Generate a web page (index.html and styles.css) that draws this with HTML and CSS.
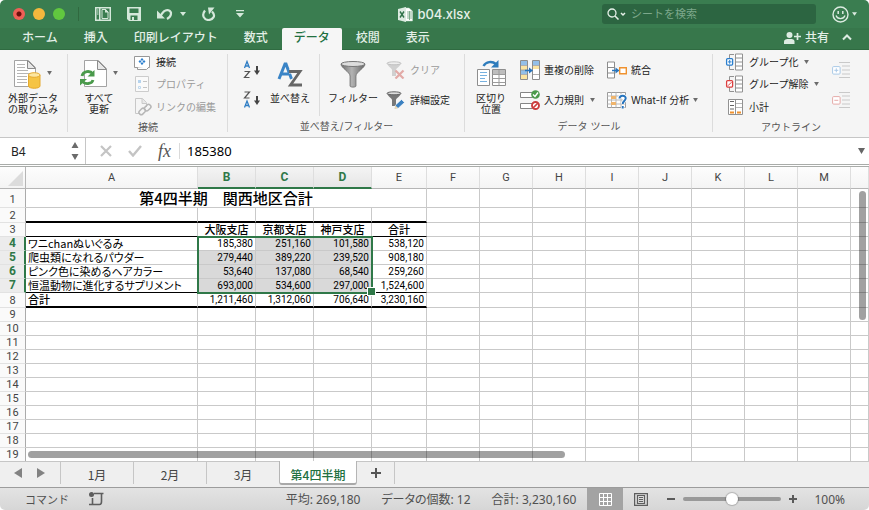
FILE: index.html
```
<!DOCTYPE html>
<html lang="ja">
  <head>
    <meta charset="UTF-8">
    <meta name="viewport" content="width=device-width, initial-scale=1.0">
    <title>b04.xlsx</title>
    <link rel="stylesheet" href="styles.css">
  </head>
  <body>
    <div class="window">

      <!-- Title bar -->
      <header class="titlebar">
        <div class="quick">
          <button class="light red" aria-label="閉じる"></button>
          <button class="light yellow" aria-label="しまう"></button>
          <button class="light green" aria-label="拡大"></button>
          <span class="quick-sep"></span>
          <button class="quick-btn" aria-label="テンプレート"><svg width="16" height="14" viewBox="0 0 16 14"><path d="M0 0h16v14H0zM1.500 1.500v11h2.500v-11zM5.500 1.500v11h9v-11z" fill="#d5e8db" fill-rule="evenodd"/><path d="M2 3h1.500M2 5h1.500M2 7h1.500" stroke="#d5e8db"/><path d="M7 2.500h3.500L13 5v6.500H7z" fill="none" stroke="#d5e8db" stroke-width="1"/><path d="M10 2v3.500h3.500V5L10.500 2z" fill="#d5e8db"/></svg></button>
          <button class="quick-btn" aria-label="保存"><svg width="14" height="14" viewBox="0 0 14 14"><path d="M0 0h14v14H2l-2-2zM2.500 1.500V6h9V1.500zM3.500 8.500V13H5v-3h2v3h3.500V8.500z" fill="#d5e8db" fill-rule="evenodd"/></svg></button>
          <button class="quick-btn undo" aria-label="元に戻す"><svg width="16" height="14" viewBox="0 0 16 14"><path d="M3.500 9C6 4.500 9 2.500 11.500 3.300c3.800 1.300 3.300 6-1.500 8.700" fill="none" stroke="#d5e8db" stroke-width="2.200"/><path d="M0 3.500v8h8z" fill="#d5e8db"/></svg><svg class="caret" width="6" height="4" viewBox="0 0 6 4"><path d="M0 0h6L3 4z" fill="#d5e8db"/></svg></button>
          <button class="quick-btn redo" aria-label="やり直し"><svg width="14" height="14" viewBox="0 0 14 14"><path d="M3 3.500C-1 8.500 2.500 13 6.500 13s8-4 3.500-8.500" fill="none" stroke="#d5e8db" stroke-width="2.200"/><path d="M6 .5h6.500L7 7.500z" fill="#d5e8db"/></svg></button>
          <button class="quick-btn" aria-label="カスタマイズ"><svg width="8" height="8" viewBox="0 0 8 8"><path d="M0 0h8v1.300H0zM0 3h8L4 7.500z" fill="#d5e8db"/></svg></button>
        </div>
        <h1 class="doc-title">
          <svg width="15" height="15" viewBox="0 0 15 15"><path d="M6 1h5l3.500 3v10H6z" fill="#fff" stroke="#c2d8ca" stroke-width=".5"/><path d="M9 5h5M9 7h5M9 9h5M9 11h5M11.500 4v9" stroke="#6aa17b" stroke-width=".8"/><path d="M0 2l8-2v15l-8-2z" fill="#dcebe1"/><path d="M2 4.500l4 6M6 4.500l-4 6" stroke="#30734a" stroke-width="1.400"/></svg>
          b04.xlsx
        </h1>
        <div class="title-right">
          <label class="search">
            <svg width="20" height="12" viewBox="0 0 20 12"><circle cx="5" cy="5" r="4" fill="none" stroke="#e5f0e8" stroke-width="1.300"/><path d="M8 8l3.500 3.500M14 5l2 2 2-2" fill="none" stroke="#e5f0e8" stroke-width="1.500"/></svg>
            <input type="text" placeholder="シートを検索" aria-label="シートを検索">
          </label>
          <button class="smile" aria-label="フィードバック"><svg width="17" height="17" viewBox="0 0 17 17"><circle cx="8.500" cy="8.500" r="7.500" fill="none" stroke="#dcebe1" stroke-width="1.400"/><path d="M6.200 5v3M10.800 5v3" stroke="#dcebe1" stroke-width="1.500"/><path d="M4 9.500c1.500 4.200 7.500 4.200 9 0" fill="none" stroke="#dcebe1" stroke-width="1.300"/></svg><svg width="5" height="4" viewBox="0 0 6 4"><path d="M0 0h6L3 4z" fill="#dcebe1"/></svg></button>
        </div>
      </header>

      <!-- Ribbon tabs -->
      <nav class="tabs">
        <a href="#">ホーム</a>
        <a href="#">挿入</a>
        <a href="#">印刷レイアウト</a>
        <a href="#">数式</a>
        <a href="#" class="active">データ</a>
        <a href="#">校閲</a>
        <a href="#">表示</a>
        <button class="share"><svg width="17" height="12" viewBox="0 0 17 12"><circle cx="5.500" cy="3" r="3" fill="#dcebe1"/><path d="M0 12V9.500C0 7.500 2 7 5.500 7s5 .5 5 2.500V12z" fill="#dcebe1"/><path d="M10 4.500h7M13.500 1v7" stroke="#dcebe1" stroke-width="1.700"/></svg>共有</button>
        <button class="fold" aria-label="リボンを折りたたむ"><svg width="10" height="7" viewBox="0 0 10 7"><path d="M1 5.500l4-4 4 4" fill="none" stroke="#dcebe1" stroke-width="2"/></svg></button>
      </nav>

      <!-- Ribbon -->
      <div class="ribbon">
        <section class="group g-import">
          <div class="tools">
            <button class="big">
              <span class="big-icon"><svg width="27" height="30" viewBox="0 0 27 30"><path d="M.5 1.500h14l7 7v19H.5z" fill="#fff" stroke="#a3a3a3"/><path d="M13.500 1.500l8 8h-8z" fill="#e8e8e8" stroke="#8c8c8c"/><path d="M3 5.500h8M3 8.500h8M3 11.500h11M3 14.500h14M3 17.500h10M3 20.500h10M3 23.500h10" stroke="#b5b5b5"/><path d="M14.500 16v11c0 3 11.500 3 11.500 0V16z" fill="#f5c445" stroke="#e5a92e"/><ellipse cx="20.200" cy="16" rx="5.800" ry="2.300" fill="#fce6a1" stroke="#e5a92e"/></svg><svg class="caret" width="5" height="4" viewBox="0 0 6 5"><path d="M0 0h6L3 5z" fill="#6b6b6b"/></svg></span>
              <span>外部データ<br>の取り込み</span>
            </button>
          </div>
        </section>

        <section class="group g-connect">
          <div class="tools">
            <button class="big">
              <span class="big-icon"><svg width="27" height="30" viewBox="0 0 27 30"><path d="M4.500 1.500h14l8 8v18h-22z" fill="#fff" stroke="#a3a3a3"/><path d="M17.500 1.500l9 9h-9z" fill="#e8e8e8" stroke="#8c8c8c"/><path d="M2 17c1-5 8-6 11-2M13 21c-1 4-8 5-11 1" fill="none" stroke="#4a9a4b" stroke-width="2.800"/><path d="M14.500 11v6.500h-7zM0 26.500V20h7z" fill="#4a9a4b"/></svg><svg class="caret" width="5" height="4" viewBox="0 0 6 5"><path d="M0 0h6L3 5z" fill="#6b6b6b"/></svg></span>
              <span>すべて<br>更新</span>
            </button>
            <div class="list three">
              <button class="small"><svg width="20" height="18" viewBox="0 0 20 18"><path d="M2.500 3.500h15v11h-15z" fill="#fff" stroke="#979797"/><path d="M5.500 14.500v2h9l3-3" fill="#fff" stroke="#979797"/><path d="M10 5l1.500 1.500L10 8 8.500 6.500zM10 9l1.500 1.500L10 12l-1.500-1.500zM8 7l1.500 1.500L8 10 6.500 8.500zM12 7l1.500 1.500L12 10l-1.500-1.500z" fill="#2b7fce"/></svg>接続</button>
              <button class="small" disabled><svg width="20" height="18" viewBox="0 0 20 18"><path d="M3.500 1.500h13v15h-13z" fill="#fafafa" stroke="#ccc"/><path d="M6 5h3v3H6z" fill="#b5d3ee"/><path d="M6.500 11.500h2v2h-2z" fill="none" stroke="#bed8ef"/><path d="M11 6.500h4M11 12.500h4" stroke="#c4c4c4"/></svg>プロパティ</button>
              <button class="small" disabled><svg width="20" height="18" viewBox="0 0 20 18"><path d="M3.500.5h7l4 4V9M3.500.5v15h4" fill="none" stroke="#c8c8c8"/><path d="M10 .5v5h5" fill="#e8e8e8" stroke="#c8c8c8"/><rect x="7" y="11.500" width="7" height="4.500" rx="2" transform="rotate(-45 10 14)" fill="none" stroke="#b6b6b6" stroke-width="1.500"/><rect x="12" y="7.500" width="7" height="4.500" rx="2" transform="rotate(-45 15.500 9.500)" fill="none" stroke="#b6b6b6" stroke-width="1.500"/></svg>リンクの編集</button>
            </div>
          </div>
          <h2>接続</h2>
        </section>

        <section class="group g-sort">
          <div class="tools">
            <div class="list two az">
              <button class="small" aria-label="昇順"><svg width="20" height="20" viewBox="0 0 20 20"><path d="M2.500 8L5 1.500 7.500 8M3.500 6h3" fill="none" stroke="#2f7dc4" stroke-width="1.300"/><path d="M2.500 11.500h5l-5 6h5" fill="none" stroke="#555" stroke-width="1.200"/><path d="M15 6v6" stroke="#444" stroke-width="2"/><path d="M12 10.500h6L15 15z" fill="#444"/></svg></button>
              <button class="small" aria-label="降順"><svg width="20" height="20" viewBox="0 0 20 20"><path d="M2.500 2h5l-5 6h5" fill="none" stroke="#555" stroke-width="1.200"/><path d="M2.500 17.500L5 11l2.500 6.500M3.500 15.500h3" fill="none" stroke="#2f7dc4" stroke-width="1.300"/><path d="M15 6v6" stroke="#444" stroke-width="2"/><path d="M12 10.500h6L15 15z" fill="#444"/></svg></button>
            </div>
            <button class="big sort">
              <span class="big-icon"><svg width="26" height="28" viewBox="0 0 26 28"><path d="M2 19L8 4h1l5.500 15M4 14h8" fill="none" stroke="#3a84c6" stroke-width="3"/><path d="M12 11.500h11L13.500 25H25" fill="none" stroke="#f5f5f5" stroke-width="4"/><path d="M12 11.500h11L13.500 25H25" fill="none" stroke="#666" stroke-width="2.800"/></svg></span>
              <span>並べ替え</span>
            </button>
            <span class="inner-sep"></span>
            <button class="big filter">
              <span class="big-icon"><svg width="26" height="28" viewBox="0 0 26 28"><defs><linearGradient id="metal"><stop offset="0" stop-color="#6e6e6e"/><stop offset=".45" stop-color="#b3b3b3"/><stop offset="1" stop-color="#666"/></linearGradient></defs><path d="M1 4c0 4 9 8 9 12v10c0 1.500 6 1.500 6 0V16c0-4 9-8 9-12z" fill="url(#metal)" stroke="#666" stroke-width=".7"/><ellipse cx="13" cy="4" rx="12" ry="2.500" fill="#ddd" stroke="#777"/></svg></span>
              <span>フィルター</span>
            </button>
            <div class="list two">
              <button class="small" disabled><svg width="20" height="18" viewBox="0 0 20 18"><path d="M1 2c0 3 5 5 5 7v6h4V9c0-2 5-4 5-7z" fill="#d0d0d0"/><ellipse cx="8" cy="2.300" rx="7" ry="1.500" fill="#eee" stroke="#c2c2c2"/><path d="M9.500 9.500l8 8M17.500 9.500l-8 8" stroke="#e2aaa7" stroke-width="2.200"/></svg>クリア</button>
              <button class="small"><svg width="20" height="18" viewBox="0 0 20 18"><path d="M1 2c0 3 5 5 5 7v6h4V9c0-2 5-4 5-7z" fill="#777"/><ellipse cx="8" cy="2.300" rx="7" ry="1.500" fill="#ddd" stroke="#666"/><path d="M8.500 18l1-4 6-5.500 3 3-6 5.500z" fill="#3b80c0" stroke="#fff" stroke-width=".6"/><path d="M8.500 18l1-3.500 2.500 2.500z" fill="#f0d9b0"/></svg>詳細設定</button>
            </div>
          </div>
          <h2>並べ替え/フィルター</h2>
        </section>

        <section class="group g-data">
          <div class="tools">
            <button class="big split">
              <span class="big-icon"><svg width="29" height="28" viewBox="0 0 29 28"><path d="M6.500 6C9 1.500 15 .8 19 4" fill="none" stroke="#2e7cbc" stroke-width="2.400"/><path d="M21.500 0v7.500H14z" fill="#2e7cbc"/><path d="M.5 9.500h12v16H.5zM15.500 9.500h13v16h-13z" fill="#fff" stroke="#8e8e8e"/><path d="M3 12.500h7M3 15.500h7M3 18.500h5M3 21.500h7" stroke="#77b1df"/><path d="M16 10h12v4H16z" fill="#bebebe"/><path d="M15.500 14.500h13M15.500 18.500h13M15.500 22.500h13M22 10v15" stroke="#9c9c9c"/></svg></span>
              <span>区切り<br>位置</span>
            </button>
            <div class="list two first">
              <button class="small"><svg width="20" height="20" viewBox="0 0 20 20"><path d="M.5.5h7v19h-7zM12.500.5h7v19h-7z" fill="#fff" stroke="#8d8d8d"/><path d="M1 1h6v4H1zM1 10h6v4H1zM13 1h6v4h-6z" fill="#93bfe8"/><path d="M1 6h6v4H1zM1 15h6v4H1zM13 6h6v3h-6z" fill="#fbe4a1"/><path d="M1 5.500h6M1 10h6M1 14.500h6M13 5.500h6M13 14.500h6" stroke="#8d8d8d" stroke-width=".7"/><path d="M5 10.500h5" stroke="#2774bd" stroke-width="1.500"/><path d="M9 7.500l4 3-4 3z" fill="#2774bd"/></svg>重複の削除</button>
              <button class="small"><svg width="20" height="20" viewBox="0 0 20 20"><path d="M.5 2.500h12v5H.5zM.5 13.500h12v5H.5z" fill="#fff" stroke="#858585"/><circle cx="15.500" cy="4.500" r="4.300" fill="#4c9a4c"/><path d="M13 4.500l2 2 3-4" fill="none" stroke="#fff" stroke-width="1.400"/><circle cx="15.500" cy="15.500" r="3.500" fill="#fff" stroke="#cc3f3f" stroke-width="1.900"/><path d="M13 18l5-5" stroke="#cc3f3f" stroke-width="1.700"/></svg>入力規則<svg class="caret" width="5" height="4" viewBox="0 0 6 5"><path d="M0 0h6L3 5z" fill="#6b6b6b"/></svg></button>
            </div>
            <div class="list two">
              <button class="small"><svg width="20" height="18" viewBox="0 0 20 18"><path d="M.5 1h7v16h-7zM.5 6.500h7M.5 12h7" fill="#fff" stroke="#8d8d8d"/><path d="M5 9.500h4" stroke="#2774bd" stroke-width="1.500"/><path d="M8.500 6.500l4 3-4 3z" fill="#2774bd"/><path d="M12.700 6.700h6.600v6h-6.600z" fill="#fff" stroke="#f0922f" stroke-width="1.400"/></svg>統合</button>
              <button class="small"><svg width="20" height="18" viewBox="0 0 20 18"><path d="M.5 1.500h18v15H.5z" fill="#fff" stroke="#9b9b9b"/><path d="M.5 5h18M.5 9h18M.5 13h18M4.500 1.500v15M9 1.500v15M14 1.500v15" stroke="#b8b8b8"/><path d="M4 5h5v3H4zM4 11h5v3H4z" fill="#efb56e"/><path d="M12.500 7.500c.3-4 6.500-3.500 6.200 0-.3 2.500-3 2.500-3 5.500M15.700 15v2.500" fill="none" stroke="#fff" stroke-width="3.500"/><path d="M12.500 7.500c.3-4 6.500-3.500 6.200 0-.3 2.500-3 2.500-3 5.500M15.700 15v2.500" fill="none" stroke="#2774bd" stroke-width="2"/></svg>What-If 分析<svg class="caret near" width="5" height="4" viewBox="0 0 6 5"><path d="M0 0h6L3 5z" fill="#6b6b6b"/></svg></button>
            </div>
          </div>
          <h2>データ ツール</h2>
        </section>

        <section class="group g-outline">
          <div class="tools">
            <div class="list three">
              <button class="small"><svg width="20" height="18" viewBox="0 0 20 18"><path d="M10.500 1h7v16h-7zM10.500 5h7M10.500 9h7M10.500 13h7" fill="#fff" stroke="#929292"/><path d="M9 1.500H4.500v15H9" fill="none" stroke="#929292"/><rect x="1.600" y="5.600" width="6" height="6.500" rx="1" fill="#fff" stroke="#2b7fce" stroke-width="1.300"/><path d="M3 8.900h3.500M4.700 7v3.700" stroke="#2b7fce"/></svg>グループ化<svg class="caret" width="5" height="4" viewBox="0 0 6 5"><path d="M0 0h6L3 5z" fill="#6b6b6b"/></svg></button>
              <button class="small"><svg width="20" height="18" viewBox="0 0 20 18"><path d="M10.500 1h7v16h-7zM10.500 5h7M10.500 9h7M10.500 13h7" fill="#fff" stroke="#929292"/><path d="M9 1.500H4.500v15H9" fill="none" stroke="#929292"/><rect x="1.600" y="5.600" width="6" height="6.500" rx="1" fill="#fff" stroke="#dc4040" stroke-width="1.300"/><path d="M3 10.700l3.500-3.500" stroke="#dc4040"/></svg>グループ解除<svg class="caret" width="5" height="4" viewBox="0 0 6 5"><path d="M0 0h6L3 5z" fill="#6b6b6b"/></svg></button>
              <button class="small"><svg width="20" height="18" viewBox="0 0 20 18"><path d="M3.500 1.500h14v15h-14zM10.500 1.500v15" fill="#fff" stroke="#929292"/><path d="M5 3.500h4M5 7.500h4M5 11h4" stroke="#666"/><path d="M11 5.500h6M11 9.500h6" stroke="#b8b8b8"/><path d="M5 14.500h4M12 14.500h4" stroke="#f0922f" stroke-width="2"/></svg>小計</button>
            </div>
            <div class="list two detail">
              <button class="small" disabled aria-label="詳細データの表示"><svg width="18" height="16" viewBox="0 0 18 16"><path d="M7 .5h11M10 4h8M10 8h8M10 12h8M7 15.500h11" stroke="#c9c9c9"/><rect x=".6" y="4.600" width="7.500" height="7.500" rx="1" fill="#fff" stroke="#a9c9e6"/><path d="M2.300 8.300h4M4.300 6.300v4" stroke="#a9c9e6"/></svg></button>
              <button class="small" disabled aria-label="詳細を表示しない"><svg width="18" height="16" viewBox="0 0 18 16"><path d="M7 .5h11M10 4h8M10 8h8M10 12h8M7 15.500h11" stroke="#c9c9c9"/><rect x=".6" y="4.600" width="7.500" height="7.500" rx="1" fill="#fff" stroke="#e5aaa8"/><path d="M2.300 8.300h4" stroke="#e5aaa8"/></svg></button>
            </div>
          </div>
          <h2>アウトライン</h2>
        </section>
      </div>

      <!-- Formula bar -->
      <div class="formula">
        <input class="name-box" type="text" value="B4" aria-label="名前ボックス">
        <button class="stepper" aria-label="名前を選択"><svg width="8" height="18" viewBox="0 0 8 18"><path d="M.5 6h7L4 0zM.5 12h7L4 18z" fill="#6b6b6b"/></svg></button>
        <div class="formula-btns">
          <button aria-label="キャンセル"><svg width="12" height="12" viewBox="0 0 12 12"><path d="M1 1l10 10M11 1L1 11" stroke="#c4c4c4" stroke-width="2.200"/></svg></button>
          <button aria-label="入力"><svg width="14" height="12" viewBox="0 0 14 12"><path d="M1 6l4 4.500L13 1" fill="none" stroke="#c4c4c4" stroke-width="2.400"/></svg></button>
          <button class="fx">fx</button>
        </div>
        <input class="value" type="text" value="185380" aria-label="数式バー">
        <button class="expand" aria-label="数式バーを展開"><svg width="7" height="6" viewBox="0 0 7 6"><path d="M0 0h7L3.500 6z" fill="#666"/></svg></button>
      </div>

      <!-- Worksheet -->
      <main class="sheet">
        <table class="grid" id="grid">
          <colgroup>
            <col class="c-num"><col class="c-a"><col class="c-b"><col class="c-b"><col class="c-b"><col class="c-e">
            <col class="c-f"><col class="c-f"><col class="c-f"><col class="c-f"><col class="c-f"><col class="c-f"><col class="c-f"><col class="c-f"><col>
          </colgroup>
          <thead>
            <tr>
              <th class="corner"><svg width="15" height="15" viewBox="0 0 15 15"><path d="M15 0v15H0z" fill="#dcdcdc"/></svg></th>
              <th>A</th><th class="on">B</th><th class="on">C</th><th class="on">D</th><th>E</th><th>F</th><th>G</th><th>H</th><th>I</th><th>J</th><th>K</th><th>L</th><th>M</th><th></th>
            </tr>
          </thead>
          <tbody>
            <tr class="r-title"><th>1</th><td colspan="5">第4四半期　関西地区合計</td></tr>
            <tr class="thick"><th>2</th><td class="k"></td><td class="k"></td><td class="k"></td><td class="k"></td><td class="k"></td></tr>
            <tr class="r-head"><th>3</th><td class="k"></td><td class="k">大阪支店</td><td class="k">京都支店</td><td class="k">神戸支店</td><td class="k">合計</td></tr>
            <tr class="on"><th>4</th><td>ワニchanぬいぐるみ</td><td class="num active">185,380<span class="selection"></span></td><td class="num sel">251,160</td><td class="num sel">101,580</td><td class="num">538,120</td></tr>
            <tr class="on"><th>5</th><td>爬虫類になれるパウダー</td><td class="num sel">279,440</td><td class="num sel">389,220</td><td class="num sel">239,520</td><td class="num">908,180</td></tr>
            <tr class="on"><th>6</th><td>ピンク色に染めるヘアカラー</td><td class="num sel">53,640</td><td class="num sel">137,080</td><td class="num sel">68,540</td><td class="num">259,260</td></tr>
            <tr class="on"><th>7</th><td class="k">恒温動物に進化するサプリメント</td><td class="num sel k">693,000</td><td class="num sel k">534,600</td><td class="num sel k">297,000</td><td class="num k">1,524,600</td></tr>
            <tr class="thick"><th>8</th><td class="k total">合計</td><td class="num k">1,211,460</td><td class="num k">1,312,060</td><td class="num k">706,640</td><td class="num k">3,230,160</td></tr>
          </tbody>
        </table>
        <div class="scroll-v"></div>
        <div class="scroll-h"></div>
      </main>

      <!-- Sheet tabs -->
      <nav class="sheets">
        <div class="sheet-nav">
          <button aria-label="前のシート"><svg width="8" height="10" viewBox="0 0 8 10"><path d="M8 0v10L0 5z" fill="#828282"/></svg></button>
          <button aria-label="次のシート"><svg width="8" height="10" viewBox="0 0 8 10"><path d="M0 0v10l8-5z" fill="#828282"/></svg></button>
        </div>
        <a href="#">1月</a>
        <a href="#">2月</a>
        <a href="#" class="last">3月</a>
        <a href="#" class="active">第4四半期</a>
        <button class="add" aria-label="シートを追加"><svg width="10" height="10" viewBox="0 0 10 10"><path d="M0 5h10M5 0v10" stroke="#555" stroke-width="2"/></svg></button>
      </nav>

      <!-- Status bar -->
      <footer class="status">
        <span class="mode">コマンド</span>
        <svg width="15" height="14" viewBox="0 0 15 14"><circle cx="2.500" cy="2.500" r="2.500" fill="#5e5e5e"/><path d="M5 1.500h9.500M3.500 6v6.500H0M2 12.500h8.500c2 0 2-1.500 2-3V1.500" fill="none" stroke="#5e5e5e" stroke-width="1.600"/></svg>
        <div class="sums">
          <span>平均: 269,180</span>
          <span>データの個数: 12</span>
          <span>合計: 3,230,160</span>
        </div>
        <button class="view on" aria-label="標準"><svg width="13" height="13" viewBox="0 0 13 13"><path d="M.5.500h12v12H.5zM.5 4.500h12M.5 8.500h12M4.500.5v12M8.500.5v12" fill="none" stroke="#fff"/></svg></button>
        <button class="view" aria-label="ページ レイアウト"><svg width="14" height="13" viewBox="0 0 14 13"><path d="M.6.600h12.800v11.800H.6zM3.500 2.500h7v8h-7z" fill="none" stroke="#5e5e5e" stroke-width="1.200"/><path d="M5 4.500h4M5 6.500h4M5 8.500h4" stroke="#5e5e5e"/></svg></button>
        <div class="zoom">
          <button aria-label="縮小"><svg width="8" height="8" viewBox="0 0 8 8"><path d="M0 4h8" stroke="#5a5a5a" stroke-width="2"/></svg></button>
          <input type="range" min="0" max="100" value="50" aria-label="ズーム">
          <button aria-label="拡大"><svg width="8" height="8" viewBox="0 0 8 8"><path d="M0 4h8M4 0v8" stroke="#5a5a5a" stroke-width="2"/></svg></button>
        </div>
        <span class="percent">100%</span>
      </footer>
    </div>

    <script>
      // Fill every row up to column N, then add the empty rows 9-19
      const COLUMNS = 14;
      const LAST_ROW = 19;
      const body = document.querySelector("#grid tbody");

      const fillRow = (row, used) => {
        for (let i = used; i < COLUMNS; i++) {
          row.insertCell();
        }
      };

      Array.from(body.rows).forEach((row) => fillRow(row, 5));

      for (let n = body.rows.length + 1; n <= LAST_ROW; n++) {
        const row = body.insertRow();
        const head = document.createElement("th");
        head.textContent = n;
        row.appendChild(head);
        fillRow(row, 0);
      }
    </script>
  </body>
</html>
```
FILE: styles.css
```
* {
  box-sizing: border-box;
}

body {
  margin: 0;
  background: #fff;
  color: #222;
  font-family: Inter, "Noto Sans CJK JP", sans-serif;
  font-size: 10px;
}

button, input {
  margin: 0;
  padding: 0;
  border: none;
  background: none;
  color: inherit;
  font: inherit;
  outline: none;
}

a {
  color: inherit;
  text-decoration: none;
}

h1, h2 {
  margin: 0;
  font-weight: normal;
}

svg {
  display: block;
  flex: none;
}

.window {
  display: flex;
  flex-direction: column;
  height: 100vh;
  border-radius: 5px;
  overflow: hidden;
}

/* Title bar */
.titlebar {
  display: grid;
  grid-template-columns: 1fr auto 1fr;
  align-items: center;
  flex: none;
  height: 28px;
  background: #3a7d50;
  color: #e6f0e9;
}

.quick {
  display: flex;
  align-items: center;
  height: 26px;
  padding-left: 13px;
}

.light {
  width: 12px;
  height: 12px;
  margin-right: 8px;
  border-radius: 50%;
}

.light.red {
  background: radial-gradient(#6b0f0c 0 2px, #ee5f56 3px);
}

.light.yellow {
  background: #f5b83d;
}

.light.green {
  background: #61c83f;
}

.quick-sep {
  width: 1px;
  height: 14px;
  margin: 0 16px 0 5px;
  background: #30693f;
}

.quick-btn {
  display: flex;
  align-items: center;
  margin-right: 16px;
}

.quick-btn .caret {
  margin-left: 7px;
}

.quick-btn.redo {
  margin-right: 20px;
}

.doc-title {
  display: flex;
  align-items: center;
  gap: 4px;
  font-size: 13px;
  font-weight: 500;
}

.title-right {
  display: flex;
  align-items: center;
  justify-content: flex-end;
  height: 26px;
  padding-right: 12px;
}

.search {
  display: flex;
  align-items: center;
  gap: 4px;
  width: 214px;
  height: 20px;
  padding-left: 5px;
  border-radius: 3px;
  background: #2c6541;
}

.search input {
  flex: 1;
  min-width: 0;
  font-size: 11px;
}

.search input::placeholder {
  color: #7ca88b;
  opacity: 1;
}

.smile {
  display: flex;
  align-items: center;
  gap: 3px;
  margin-left: 16px;
}

/* Ribbon tabs */
.tabs {
  display: flex;
  gap: 2px;
  flex: none;
  height: 22px;
  padding: 0 17px 0 10px;
  background: #37774b;
  box-shadow: inset 0 -1px #2f6b41;
  color: #e3efe7;
  font-size: 12px;
  font-weight: 500;
  line-height: 20px;
}

.tabs a {
  padding: 0 12px;
  white-space: nowrap;
}

.tabs .active {
  border-radius: 2px 2px 0 0;
  background: #f6f6f6;
  color: #21703f;
}

.share {
  display: flex;
  align-items: center;
  gap: 4px;
  height: 19px;
  margin-left: auto;
}

.fold {
  height: 19px;
  margin-left: 11px;
}

/* Ribbon */
.ribbon {
  display: flex;
  flex: none;
  height: 88px;
  border-bottom: 1px solid #c6c6c6;
  background: #f5f5f5;
  line-height: 10px;
}

.group {
  display: flex;
  flex-direction: column;
  flex: none;
  background: linear-gradient(#dcdcdc, #dcdcdc) right 4px / 1px 78px no-repeat;
}

.g-import {
  width: 68px;
}

.g-connect {
  width: 160px;
}

.g-sort {
  width: 237px;
}

.g-data {
  width: 248px;
}

.g-outline {
  flex: 1;
  background: none;
}

.group h2 {
  height: 20px;
  color: #555;
  font-size: 10px;
  line-height: 19px;
  text-align: center;
}

.tools {
  display: flex;
  height: 68px;
  padding-left: 7px;
}

.g-connect .tools {
  padding-left: 5px;
}

.g-sort .tools {
  padding-left: 14px;
}

.g-data .tools {
  padding-left: 3px;
}

.g-outline .tools {
  padding-left: 12px;
}

.big {
  display: flex;
  flex-direction: column;
  align-items: center;
  flex: none;
  width: 52px;
  padding-top: 8px;
  line-height: 11px;
  white-space: nowrap;
}

.big-icon {
  display: flex;
  align-items: center;
  height: 31px;
  margin-bottom: 4px;
}

.big .caret {
  align-self: flex-start;
  margin: 13px 0 0 6px;
}

.big.sort {
  width: 48px;
  margin-left: 4px;
}

.inner-sep {
  width: 1px;
  height: 62px;
  margin: 4px 7px 0 5px;
  background: #dcdcdc;
}

.big.split {
  width: 46px;
}

.list {
  display: flex;
  flex-direction: column;
  margin-left: 7px;
}

.list.three {
  padding-top: 1px;
}

.list.two {
  padding-top: 5px;
}

.list.az {
  margin-left: 0;
}

.list.first {
  width: 87px;
  margin-left: 6px;
}

.list.first + .list {
  margin-left: 0;
}

.g-outline .three {
  width: 107px;
  margin-left: 0;
}

.list.detail {
  margin-left: 0;
}

.small {
  display: flex;
  align-items: center;
  gap: 4px;
  height: 30px;
  white-space: nowrap;
}

.three .small {
  height: 23px;
}

.small:disabled {
  color: #9a9a9a;
}

.small .caret {
  margin-left: 2px;
}

.small .near {
  margin-left: 0;
}

/* Formula bar */
.formula {
  display: flex;
  align-items: center;
  flex: none;
  height: 29px;
  border-bottom: 3px double #a9aca9;
  background: #fff;
  font-family: "Noto Sans", "Noto Sans CJK JP", sans-serif;
  font-size: 12px;
}

.name-box {
  width: 71px;
  height: 100%;
  padding-left: 11px;
}

.stepper {
  display: flex;
  align-items: center;
  height: 100%;
  width: 15px;
  border-right: 1px solid #c6c6c6;
}

.formula-btns {
  display: flex;
  align-items: center;
  gap: 16px;
  padding: 0 8px 0 14px;
  border-right: 1px solid #dadada;
}

.fx {
  color: #555;
  font-family: "Liberation Serif", serif;
  font-size: 18px;
  font-style: italic;
  line-height: 16px;
}

.value {
  flex: 1;
  min-width: 0;
  padding-left: 7px;
  color: #000;
  font-size: 13px;
}

.expand {
  margin-right: 4px;
}

/* Worksheet */
.sheet {
  position: relative;
  flex: 1;
  min-height: 0;
  overflow: hidden;
}

.grid {
  width: 100%;
  table-layout: fixed;
  border-collapse: separate;
  border-spacing: 0;
  color: #000;
  font-family: "Noto Sans CJK JP", sans-serif;
  font-size: 11px;
  font-feature-settings: "palt";
}

.c-num { width: 26px; }
.c-a { width: 172px; }
.c-b { width: 58px; }
.c-e { width: 55px; }
.c-f { width: 53px; }

.grid th, .grid td {
  height: 14px;
  padding: 0 2px;
  border: 0 solid #c9c9c9;
  border-width: 0 1px 1px 0;
  line-height: 13px;
  white-space: nowrap;
}

.grid th {
  color: #444;
  font-family: Roboto, sans-serif;
  font-size: 11px;
  font-weight: normal;
}

.grid thead th {
  height: 22px;
  border-color: #dedede #dedede #b5b5b5;
  background: linear-gradient(#fdfdfd, #f4f4f4);
}

.grid thead .corner {
  padding: 2px 0 0 8px;
  border-right-color: #b5b5b5;
}

.grid tbody th {
  border-color: #e2e2e2 #ababab;
  background: #fafafa;
}

.grid thead .on {
  border-bottom: 2px solid #2f7848;
  background: linear-gradient(#f4f4f4, #e6e6e6);
  color: #2f7848;
  font-size: 12px;
  font-weight: bold;
}

.grid .on th {
  padding-right: 1px;
  border-right: 2px solid #2f7848;
  background: #ececec;
  color: #2f7848;
  font-size: 12px;
  font-weight: bold;
}

.grid .r-title th, .grid .r-title td {
  height: 19px;
  line-height: 18px;
}

.grid .r-title th {
  padding-top: 4px;
  line-height: 14px;
}

.r-title td[colspan] {
  font-size: 15px;
  font-weight: 500;
  text-align: center;
}

.grid .thick th, .grid .thick td {
  height: 15px;
}

.grid .k {
  border-bottom-color: #000;
}

.grid .thick .k {
  border-bottom-width: 2px;
}

.r-head td {
  font-weight: 500;
  text-align: center;
}

.grid .total {
  font-weight: 500;
}

.grid .num {
  font-family: Roboto, sans-serif;
  font-size: 10px;
  text-align: right;
}

.grid .sel {
  background: #d9d9d9;
}

.grid .active {
  position: relative;
}

/* Green frame round B4:D7 with its fill handle */
.selection {
  position: absolute;
  z-index: 1;
  top: -1px;
  left: -1px;
  width: 176px;
  height: 58px;
  border: 2px solid #2f7848;
}

.selection::after {
  content: "";
  position: absolute;
  right: -5px;
  bottom: -4px;
  width: 7px;
  height: 7px;
  border: 1px solid #fff;
  background: #2f7848;
}

.scroll-v, .scroll-h {
  position: absolute;
  border-radius: 4px;
  background: rgba(0, 0, 0, 0.37);
}

.scroll-v {
  top: 24px;
  right: 3px;
  width: 7px;
  height: 44%;
}

.scroll-h {
  left: 28px;
  right: 35%;
  bottom: 3px;
  height: 7px;
}

/* Sheet tabs */
.sheets {
  display: flex;
  flex: none;
  height: 26px;
  border-top: 1px solid #c6c6c6;
  background: #efefef;
  color: #444;
  font-family: "Noto Sans CJK JP", sans-serif;
  font-size: 12px;
  line-height: 25px;
}

.sheet-nav {
  display: flex;
  align-items: center;
  gap: 15px;
  width: 61px;
  height: 22px;
  padding-left: 14px;
  border-right: 1px solid #c6c6c6;
}

.sheets a {
  width: 73px;
  height: 22px;
  border-right: 1px solid #c6c6c6;
  text-align: center;
}

.sheets .last {
  width: 72px;
  border-right: none;
}

.sheets .active {
  width: 78px;
  height: 24px;
  margin-top: -1px;
  border: 1px solid #b5b5b5;
  border-top: none;
  border-bottom: 2px solid #a9a9a9;
  border-radius: 0 0 3px 3px;
  background: #fff;
  color: #21703f;
  font-weight: 500;
  line-height: 27px;
}

.add {
  display: flex;
  align-items: center;
  justify-content: center;
  width: 38px;
  height: 22px;
  border-right: 1px solid #c6c6c6;
}

/* Status bar */
.status {
  display: flex;
  align-items: center;
  flex: none;
  height: 23px;
  border-top: 1px solid #9c9c9c;
  background: linear-gradient(#e3e3e3, #d6d6d6);
  color: #505050;
  font-family: "Noto Sans", "Noto Sans CJK JP", sans-serif;
  font-size: 12px;
}

.mode {
  margin: 0 20px 0 25px;
  font-size: 11px;
}

.sums {
  display: flex;
  gap: 21px;
  margin: 0 11px 0 auto;
  font-feature-settings: "palt";
}

.view {
  display: flex;
  align-items: center;
  justify-content: center;
  width: 36px;
  height: 100%;
}

.view.on {
  background: #a3a3a3;
}

.zoom {
  display: flex;
  align-items: center;
  gap: 8px;
  margin-left: 8px;
}

.zoom input {
  width: 98px;
  height: 12px;
  appearance: none;
}

.zoom input::-webkit-slider-runnable-track {
  height: 4px;
  border-radius: 2px;
  background: #999;
}

.zoom input::-webkit-slider-thumb {
  width: 12px;
  height: 12px;
  margin-top: -4px;
  border-radius: 50%;
  background: #fff;
  box-shadow: 0 0 1px 1px rgba(0, 0, 0, 0.2);
  appearance: none;
}

.percent {
  margin: 0 24px 0 17px;
}
```
